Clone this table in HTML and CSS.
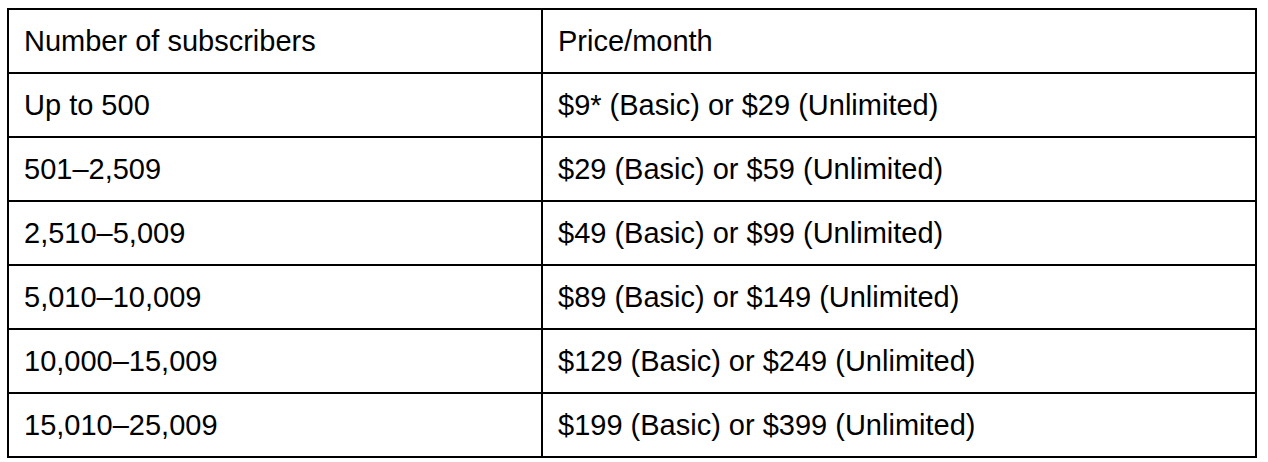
FILE: index.html
```html
<!DOCTYPE html>
<html>
<head>
<meta charset="utf-8">
<link rel="stylesheet" href="styles.css">
</head>
<body>
<table class="pricing">
  <tr><td class="c1">Number of subscribers</td><td class="c2">Price/month</td></tr>
  <tr><td class="c1">Up to 500</td><td class="c2">$9* (Basic) or $29 (Unlimited)</td></tr>
  <tr><td class="c1">501–2,509</td><td class="c2">$29 (Basic) or $59 (Unlimited)</td></tr>
  <tr><td class="c1">2,510–5,009</td><td class="c2">$49 (Basic) or $99 (Unlimited)</td></tr>
  <tr><td class="c1">5,010–10,009</td><td class="c2">$89 (Basic) or $149 (Unlimited)</td></tr>
  <tr><td class="c1">10,000–15,009</td><td class="c2">$129 (Basic) or $249 (Unlimited)</td></tr>
  <tr><td class="c1">15,010–25,009</td><td class="c2">$199 (Basic) or $399 (Unlimited)</td></tr>
</table>
</body>
</html>
```
FILE: styles.css
```css
html, body {
  margin: 0;
  padding: 0;
  background: #ffffff;
}
body {
  padding: 8px 0 0 7px;
  font-family: "Liberation Sans", Arial, Helvetica, sans-serif;
  color: #000;
}
.pricing {
  border-collapse: separate;
  border-spacing: 0;
  width: 1250px;
  border-top: 2px solid #000;
  border-left: 2px solid #000;
}
.pricing td {
  border-right: 2px solid #000;
  border-bottom: 2px solid #000;
  height: 64px;
  padding: 0 0 0 15px;
  font-size: 29px;
  line-height: 32px;
  vertical-align: middle;
  box-sizing: border-box;
}
.pricing .c1 {
  width: 534px;
}
```
